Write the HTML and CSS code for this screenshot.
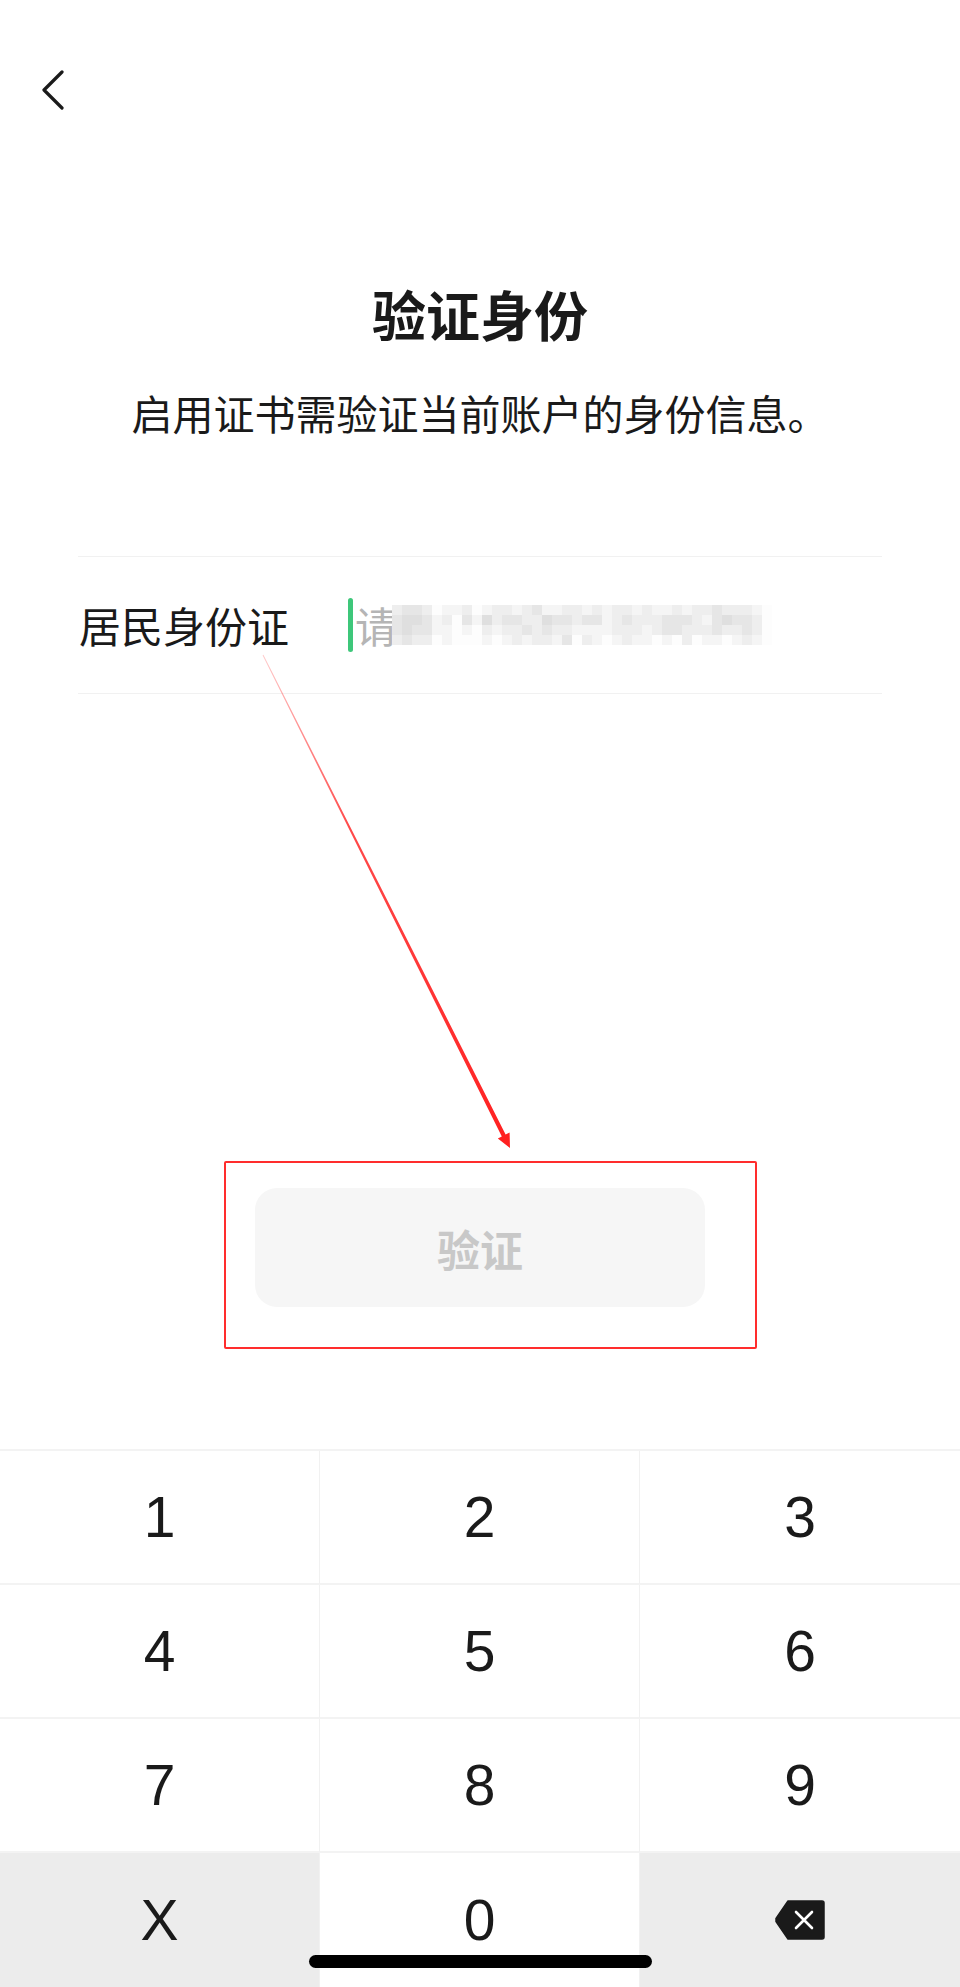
FILE: index.html
```html
<!DOCTYPE html>
<html lang="zh-CN">
<head>
    <meta charset="UTF-8">
    <meta name="viewport" content="width=device-width, initial-scale=1.0">
    <title>验证身份</title>
    <link rel="stylesheet" href="styles.css">
</head>
<body>

<div class="screen">
    <!-- Top bar -->
    <div class="nav">
        <svg class="back-icon" width="22" height="40" viewBox="0 0 22 40">
            <polyline points="20,2 2,20 20,38" fill="none" stroke="#1a1a1a" stroke-width="3.2" stroke-linecap="round" stroke-linejoin="round"/>
        </svg>
    </div>

    <!-- Heading -->
    <div class="intro">
        <h1 class="title">验证身份</h1>
        <p class="subtitle">启用证书需验证当前账户的身份信息。</p>
    </div>

    <!-- ID field -->
    <div class="field">
        <span class="field-label">居民身份证</span>
        <div class="field-input">
            <span class="cursor"></span>
            <span class="placeholder">请</span>
            <div class="mosaic" id="mosaic"></div>
        </div>
    </div>

    <!-- Verify button -->
    <div class="actions">
        <button class="verify-btn" disabled>验证</button>
    </div>

    <!-- Number pad -->
    <div class="keypad">
        <div class="key">1</div>
        <div class="key">2</div>
        <div class="key">3</div>
        <div class="key">4</div>
        <div class="key">5</div>
        <div class="key">6</div>
        <div class="key">7</div>
        <div class="key">8</div>
        <div class="key">9</div>
        <div class="key key-dark">X</div>
        <div class="key">0</div>
        <div class="key key-dark">
            <svg width="50" height="40" viewBox="0 0 50 40">
                <path d="M13 1 H47 Q49 1 49 3 V37 Q49 39 47 39 H13 L1 21.5 V18.5 Z" fill="#1a1a1a" stroke="#1a1a1a" stroke-width="1.5" stroke-linejoin="round"/>
                <path d="M21 12 L37 28 M37 12 L21 28" stroke="#fff" stroke-width="2.6" stroke-linecap="round"/>
            </svg>
        </div>
    </div>

    <div class="home-indicator"></div>

    <!-- Annotation overlay -->
    <div class="annotation-box"></div>
    <svg class="annotation-arrow" width="960" height="1987" viewBox="0 0 960 1987">
        <defs>
            <linearGradient id="arrowFade" x1="263" y1="655" x2="510" y2="1148" gradientUnits="userSpaceOnUse">
                <stop offset="0" stop-color="#ff2a2a" stop-opacity="0.25"/>
                <stop offset="0.35" stop-color="#ff2a2a" stop-opacity="0.85"/>
                <stop offset="1" stop-color="#ff1f1f" stop-opacity="1"/>
            </linearGradient>
        </defs>
        <polygon points="263.4,654.8 505.6,1134.6 509.6,1132.6 510,1148 497.8,1138.4 501.8,1136.4 262.6,655.2" fill="url(#arrowFade)"/>
    </svg>
</div>

<script>
    // Pixelated placeholder text (privacy mosaic)
    const rows = [
        "23320112012212311221212212112122322210",
        "34431203142332243323312322233321343320",
        "34331101021223232211112221233222322320",
        "23220100010121221302101211010201101210"
    ];
    const shades = ['#fdfdfd', '#f5f5f5', '#eeeeee', '#e6e6e6', '#dfdfdf'];
    const mosaic = document.getElementById('mosaic');
    rows.forEach(row => {
        const line = document.createElement('div');
        line.className = 'mosaic-row';
        row.split('').forEach(level => {
            const cell = document.createElement('span');
            cell.className = 'mosaic-cell';
            cell.style.background = shades[Number(level)];
            line.appendChild(cell);
        });
        mosaic.appendChild(line);
    });
</script>

</body>
</html>
```

FILE: styles.css
```css
/* Reset */
*, *::before, *::after {
    margin: 0;
    padding: 0;
    box-sizing: border-box;
}

:root {
    --text-color: #1a1a1a;
    --line-color: #f1f1f1;
    --key-dark: #ececec;
    --accent: #3ec77a;
    --mark-red: #ff2d2d;
}

body {
    font-family: "Noto Sans CJK SC", "Noto Sans", sans-serif;
    background: #fff;
    color: var(--text-color);
}

.screen {
    position: relative;
    width: 960px;
    height: 1987px;
    display: flex;
    flex-direction: column;
    overflow: hidden;
}

/* Nav */
.nav {
    height: 180px;
    padding: 70px 0 0 42px;
}

.back-icon {
    display: block;
}

/* Heading */
.intro {
    margin-top: 107px;
    text-align: center;
}

.title {
    font-size: 54px;
    line-height: 54px;
    font-weight: 700;
}

.subtitle {
    margin-top: 51px;
    font-size: 41px;
    line-height: 41px;
}

/* Field */
.field {
    margin: 123px 78px 0;
    height: 138px;
    border-top: 1px solid var(--line-color);
    border-bottom: 1px solid var(--line-color);
    display: flex;
    align-items: center;
}

.field-label {
    width: 270px;
    padding-left: 1px;
    font-size: 42px;
    line-height: 42px;
}

.field-input {
    display: flex;
    align-items: center;
}

.cursor {
    width: 5px;
    height: 54px;
    border-radius: 3px;
    background: var(--accent);
}

.placeholder {
    margin-left: 2px;
    font-size: 42px;
    line-height: 42px;
    color: #b5b5b5;
}

.mosaic {
    margin-left: -5px;
    display: flex;
    flex-direction: column;
}

.mosaic-row {
    display: flex;
}

.mosaic-cell {
    width: 10px;
    height: 10px;
}

/* Button */
.actions {
    margin-top: 494px;
    display: flex;
    justify-content: center;
}

.verify-btn {
    width: 450px;
    height: 119px;
    border: none;
    border-radius: 22px;
    background: #f6f6f6;
    color: #c8c8c8;
    font-family: inherit;
    font-size: 43px;
    font-weight: 700;
}

/* Keypad */
.keypad {
    margin-top: auto;
    display: grid;
    grid-template-columns: 320px 320px 320px;
    grid-auto-rows: 134px;
    border-top: 2px solid #f3f3f3;
}

.key {
    display: flex;
    align-items: center;
    justify-content: center;
    font-family: "Liberation Sans", Arial, sans-serif;
    font-size: 57px;
    color: var(--text-color);
    border-right: 1px solid var(--line-color);
    border-bottom: 2px solid #f3f3f3;
}

.key:nth-child(3n) {
    border-right: none;
}

.key:nth-child(n+10) {
    border-bottom: none;
}

.key-dark {
    background: var(--key-dark);
}

.home-indicator {
    position: absolute;
    left: 309px;
    bottom: 19px;
    width: 343px;
    height: 13px;
    border-radius: 7px;
    background: #000;
}

/* Annotation overlay */
.annotation-box {
    position: absolute;
    left: 224px;
    top: 1161px;
    width: 533px;
    height: 188px;
    border: 2px solid var(--mark-red);
    border-radius: 2px;
}

.annotation-arrow {
    position: absolute;
    left: 0;
    top: 0;
    pointer-events: none;
}
```
